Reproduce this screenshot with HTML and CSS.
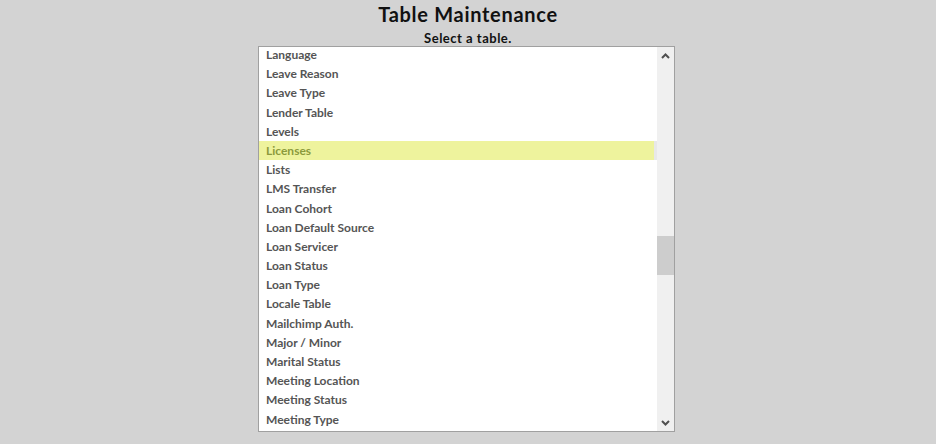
FILE: index.html
```html
<!DOCTYPE html>
<html>
<head>
<meta charset="utf-8">
<link rel="stylesheet" href="styles.css">
</head>
<body>
<div class="page">
  <h1 class="title">Table Maintenance</h1>
  <div class="subtitle">Select a table.</div>
  <div class="listbox">
    <div class="list">
      <div class="items">
        <div class="item">Language</div>
        <div class="item">Leave Reason</div>
        <div class="item">Leave Type</div>
        <div class="item">Lender Table</div>
        <div class="item">Levels</div>
        <div class="item selected">Licenses</div>
        <div class="item">Lists</div>
        <div class="item">LMS Transfer</div>
        <div class="item">Loan Cohort</div>
        <div class="item">Loan Default Source</div>
        <div class="item">Loan Servicer</div>
        <div class="item">Loan Status</div>
        <div class="item">Loan Type</div>
        <div class="item">Locale Table</div>
        <div class="item">Mailchimp Auth.</div>
        <div class="item">Major / Minor</div>
        <div class="item">Marital Status</div>
        <div class="item">Meeting Location</div>
        <div class="item">Meeting Status</div>
        <div class="item">Meeting Type</div>
      </div>
    </div>
    <div class="scrollbar">
      <div class="arrow">
        <svg width="9" height="6" viewBox="0 0 9 6"><path d="M1 5 L4.5 1.5 L8 5" fill="none" stroke="#505050" stroke-width="2"/></svg>
      </div>
      <div class="track">
        <div class="thumb"></div>
      </div>
      <div class="arrow">
        <svg width="9" height="6" viewBox="0 0 9 6"><path d="M1 1 L4.5 4.5 L8 1" fill="none" stroke="#505050" stroke-width="2"/></svg>
      </div>
    </div>
  </div>
</div>
</body>
</html>
```
FILE: styles.css
```css
html, body {
  margin: 0;
  padding: 0;
  background: #d3d3d3;
  font-family: "Lato", "DejaVu Sans", sans-serif;
}
.page {
  display: flex;
  flex-direction: column;
  align-items: center;
  padding-top: 2px;
}
.title {
  margin: 0;
  font-size: 20px;
  font-weight: bold;
  color: #111;
  line-height: 24px;
  letter-spacing: 0.7px;
}
.subtitle {
  margin-top: 4px;
  font-size: 13px;
  font-weight: bold;
  color: #111;
  line-height: 16px;
  letter-spacing: 0.5px;
}
.listbox {
  width: 415px;
  height: 384px;
  border: 1px solid #a0a0a0;
  background: #fff;
  display: flex;
  margin-right: 3px;
}
.list {
  flex: 1;
  overflow: hidden;
}
.items {
  margin-top: -2px;
}
.item {
  height: 19.2px;
  line-height: 19.2px;
  padding-left: 7px;
  font-size: 12px;
  font-weight: bold;
  color: #555;
  white-space: nowrap;
}
.item.selected {
  background: #eef39d;
  color: #8c9a3c;
  margin-right: 3px;
  box-shadow: 3px 0 0 #e8e8e8;
}
.scrollbar {
  width: 17px;
  background: #f0f0f0;
  display: flex;
  flex-direction: column;
}
.arrow {
  height: 17px;
  display: flex;
  align-items: center;
  justify-content: center;
}
.track {
  flex: 1;
  padding-top: 172px;
}
.thumb {
  height: 39px;
  background: #cdcdcd;
}
```
